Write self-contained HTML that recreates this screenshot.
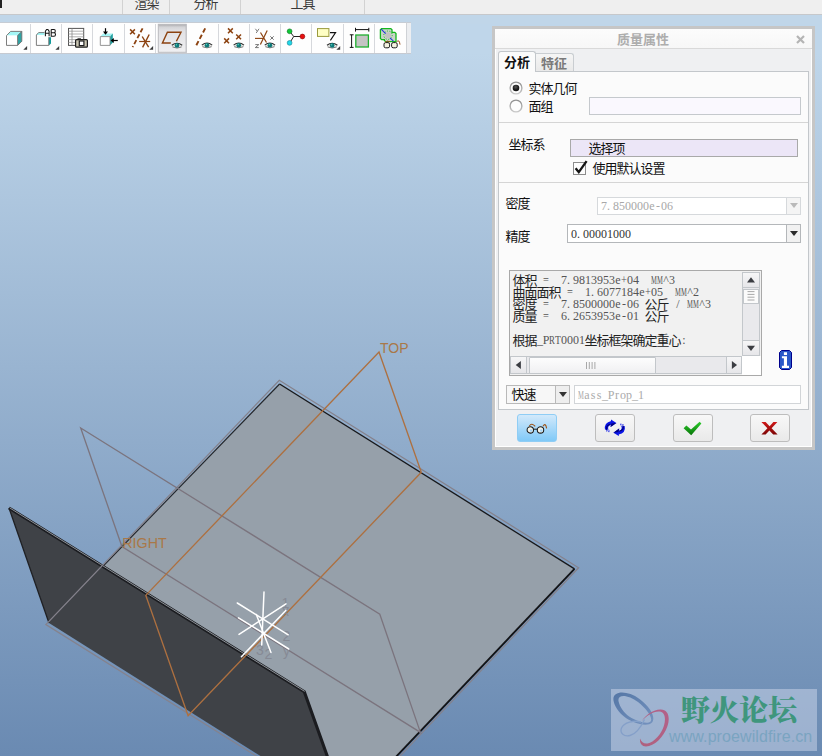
<!DOCTYPE html>
<html><head><meta charset="utf-8"><title>Mass Properties</title>
<style>
html,body{margin:0;padding:0}
body{width:822px;height:756px;overflow:hidden;position:relative;font-family:"Liberation Sans",sans-serif;
background:#95b0cf}
.abs{position:absolute}
#view{position:absolute;left:0;top:0;width:822px;height:756px;background:linear-gradient(to bottom,#bfd6ea 53px,#6a8ab2 756px)}
#menubar{position:absolute;left:0;top:0;width:822px;height:13.6px;background:#efefef;border-bottom:1px solid #c6c8cb;overflow:hidden}
#menubar i{position:absolute;top:0;width:1px;height:14px;background:#d2d2d2}
#strip{position:absolute;left:0;top:14.6px;width:822px;height:9px;background:#c0d6e9}
#toolbar{position:absolute;left:0;top:21.7px;width:405.5px;height:30.2px;background:#fefefe;border-top:1px solid #c6ccd4;border-bottom:1px solid #c6cad1;border-right:1px solid #cfd2d6}
#toolbar i{position:absolute;top:1px;width:1px;height:29px;background:#d6d8dc}
#dlg{position:absolute;left:492px;top:26px;width:317px;height:418px;border:3px solid #c6c6c6;background:#eff0f2}
#dlg .inner{position:absolute;left:0;top:0;right:0;bottom:0;border:1px solid #fff}
#title{position:absolute;left:0;top:0;width:317px;height:19px;background:linear-gradient(#fcfcfc,#f7f7f7);border-bottom:1px solid #d9d9d9}
#panel{position:absolute;left:3px;top:42px;width:309px;height:337px;border:1px solid #c3c7cb;background:#fbfbfb}
.hr{position:absolute;left:0;width:309px;height:1px;background:#d5d5d5}
.fld{position:absolute;box-sizing:border-box;border:1px solid #c5c9cd;background:#fff}
.btn{position:absolute;box-sizing:border-box;width:40px;height:28px;top:388px;border:1px solid #bdbdbd;border-radius:3px;background:linear-gradient(#f8f8f8,#e9e9e9)}
.cj{font-family:"Liberation Sans","Noto Sans CJK SC",sans-serif;font-size:12.96px;letter-spacing:-0.96px}
.cjb{font-family:"Liberation Sans","Noto Sans CJK SC",sans-serif;font-size:13px;font-weight:bold}
</style></head><body>
<div id="view"></div>

<svg class="abs" style="left:0;top:0" width="822" height="756" viewBox="0 0 822 756">
<polygon points="279.3,383.4 574.7,568.8 396.6,756 300,756 304,691.5 102.7,565.6" fill="#96a0aa"/>
<polyline points="103.2,566 279.6,384 " fill="none" stroke="#23262c" stroke-width="1.15"/>
<polyline points="279.6,384 574.5,568.9" fill="none" stroke="#17181b" stroke-width="1.35"/>
<polyline points="574.5,568.9 396.2,756.6" fill="none" stroke="#121316" stroke-width="1.9"/>
<polygon points="9,508 304.2,691.6 327,756 260.5,756 49,623" fill="#3f4247"/>
<polyline points="9,508 304.3,691.7 327.4,756.5" fill="none" stroke="#1b1c20" stroke-width="3.1" stroke-linejoin="miter"/>
<polyline points="9.6,507.8 304.7,691.4" fill="none" stroke="#9a9fa6" stroke-width="0.9"/>
<polyline points="9,508 49,623" fill="none" stroke="#1f2024" stroke-width="1.3"/>
<!-- FRONT datum (gray) -->
<polyline points="397.2,759 578.6,567.8 279.3,380.2 45.9,624.6 267.4,763" fill="none" stroke="#85828c" stroke-width="1.25"/>
<!-- RIGHT datum (gray) -->
<polygon points="80.7,428 379.8,614.2 420.4,732.4 121.9,546.5" fill="none" stroke="#7b747e" stroke-width="1.3"/>
<!-- TOP datum (orange) -->
<polygon points="379,352 421.3,472.3 188.1,715.7 145.8,595.4" fill="none" stroke="#ad7040" stroke-width="1.35"/>
<g font-family="Liberation Sans, sans-serif" font-size="14" fill="#868a95">
<text x="281.5" y="608">1</text><text x="282" y="615.7">x</text><text x="282.6" y="640.7">2</text><text x="283" y="656.2">y</text><text x="256" y="655">3</text><text x="264.6" y="659.2">2</text>
</g>
<g stroke="#fff" stroke-width="1.5" stroke-linecap="round">
<line x1="264" y1="592" x2="261.7" y2="645"/>
<line x1="237.3" y1="603" x2="288.2" y2="634.8"/>
<line x1="238.5" y1="617.9" x2="288.8" y2="649"/>
<line x1="239" y1="634.4" x2="286" y2="603.8"/>
<line x1="241.4" y1="656.8" x2="285.8" y2="610.4"/>
<line x1="256.3" y1="614.5" x2="271" y2="652.6"/>
</g>

<g font-family="Liberation Sans, sans-serif" font-size="14" fill="#a97848">
<text x="380" y="353">TOP</text><text x="122.3" y="547.8" font-size="14.3">RIGHT</text>
</g>
</svg>

<div id="menubar"><i style="left:122px"></i><i style="left:169px"></i><i style="left:240px"></i><i style="left:364px"></i><b class="abs" style="left:0;top:0;width:2px;height:8px;background:#222"></b>
<svg role="img" aria-label="渲染" style="position:absolute;left:134.7px;top:-2.6px;overflow:visible;" width="26" height="16"><text class="cj" x="-0.5" y="10.92" fill="#3a3a3a">渲染</text></svg>
<svg role="img" aria-label="分析" style="position:absolute;left:193.6px;top:-2.6px;overflow:visible;" width="26" height="16"><text class="cj" x="-0.5" y="10.92" fill="#3a3a3a">分析</text></svg>
<svg role="img" aria-label="工具" style="position:absolute;left:290.6px;top:-2.6px;overflow:visible;" width="26" height="16"><text class="cj" x="-0.5" y="10.92" fill="#3a3a3a">工具</text></svg>
</div><div id="strip"></div><div class="abs" style="left:406.5px;top:21.7px;width:4px;height:32.2px;background:#eceef1;border-top:1px solid #c6ccd4;border-bottom:1px solid #c6cad1;box-sizing:border-box"></div>
<div id="toolbar">
<i style="left:29.90px"></i>
<i style="left:61.17px"></i>
<i style="left:92.44px"></i>
<i style="left:123.71px"></i>
<i style="left:154.98px"></i>
<i style="left:186.25px"></i>
<i style="left:217.52px"></i>
<i style="left:248.79px"></i>
<i style="left:280.06px"></i>
<i style="left:311.33px"></i>
<i style="left:342.60px"></i>
<i style="left:373.87px"></i>
<svg class="abs" style="left:0;top:0.3px" width="410" height="30" viewBox="0 0 410 30"><defs><linearGradient id="pb" x1="0" y1="0" x2="0" y2="1"><stop offset="0" stop-color="#a9a9ac"/><stop offset="0.1" stop-color="#d4d4d7"/><stop offset="0.25" stop-color="#e2e2e5"/><stop offset="1" stop-color="#f0f0f2"/></linearGradient></defs><rect x="158.3" y="1.3" width="27.8" height="28" fill="url(#pb)" stroke="#b9b9bd" stroke-width="1"/><polygon points="6.5,12.600000000000001 10.6,8.399999999999999 21.8,8.399999999999999 17.6,12.600000000000001" fill="#a4f6f6"/><polygon points="17.6,12.600000000000001 21.8,8.399999999999999 21.8,18.299999999999997 17.6,22.4" fill="#2fa3a3"/><polygon points="6.5,12.600000000000001 17.6,12.600000000000001 17.6,22.4 6.5,22.4" fill="#ffffff"/><path d="M6.5 12.600000000000001L10.6 8.399999999999999H21.8V18.299999999999997L17.6 22.4H6.5ZM17.6 22.4V12.600000000000001L21.8 8.399999999999999" fill="none" stroke="#6e6e6e" stroke-width="0.9"/><path d="M27.1 22.9V26.7H23.3Z" fill="#3c3c3c"/><polygon points="36.4,12 38.6,9.600000000000001 44.5,9.600000000000001 44.5,12" fill="#a4f6f6"/><polygon points="48.8,14.200000000000003 51,14.200000000000003 51,20.6 48.8,22.4" fill="#119a9a"/><path d="M44.5 9.600000000000001H38.6L36.4 12V22.4H48.8V14.200000000000003" fill="none" stroke="#6e6e6e" stroke-width="0.9"/><path d="M45.4 13.200000000000003V8.2L46.6 6.399999999999999H47.9L49.1 8.2V13.200000000000003M45.4 10.299999999999997H49.1M51.2 6.399999999999999V13.200000000000003H54Q55.5 13.200000000000003 55.5 11.399999999999999Q55.5 9.700000000000003 54 9.700000000000003H51.2M54 9.700000000000003Q55.3 9.700000000000003 55.3 8Q55.3 6.399999999999999 54 6.399999999999999H51.2" fill="none" stroke="#151515" stroke-width="1.05"/><path d="M59.199999999999996 22.9V26.7H55.4Z" fill="#3c3c3c"/><rect x="68.5" y="5.399999999999999" width="15.2" height="17" fill="#fff" stroke="#555" stroke-width="1"/><line x1="68.5" y1="8.2" x2="83.7" y2="8.2" stroke="#9a9a9a" stroke-width="0.8" /><line x1="68.5" y1="11" x2="83.7" y2="11" stroke="#9a9a9a" stroke-width="0.8" /><line x1="68.5" y1="13.799999999999997" x2="83.7" y2="13.799999999999997" stroke="#9a9a9a" stroke-width="0.8" /><line x1="68.5" y1="16.6" x2="83.7" y2="16.6" stroke="#9a9a9a" stroke-width="0.8" /><line x1="68.5" y1="19.4" x2="83.7" y2="19.4" stroke="#9a9a9a" stroke-width="0.8" /><line x1="72" y1="5.399999999999999" x2="72" y2="22.4" stroke="#8a8a8a" stroke-width="0.8" /><rect x="75.6" y="16.6" width="11.8" height="7.6" rx="1" fill="#c9c5b2" stroke="#1e1e1e" stroke-width="1.2"/><rect x="77.5" y="15.299999999999997" width="3.4" height="1.6" fill="#1e1e1e"/><rect x="79.3" y="18" width="4.6" height="4.6" fill="#fff" stroke="#1e1e1e" stroke-width="1.2"/><polygon points="100.3,13.600000000000001 103.2,10.600000000000001 112.8,10.600000000000001 110,13.600000000000001" fill="#a4f6f6"/><polygon points="110,13.600000000000001 112.8,10.600000000000001 112.8,19.6 110,22.4" fill="#1fa0a0"/><polygon points="100.3,13.600000000000001 110,13.600000000000001 110,22.4 100.3,22.4" fill="#fff" stroke="#8a8a8a" stroke-width="0.9"/><line x1="105.5" y1="5.199999999999999" x2="105.5" y2="11" stroke="#000" stroke-width="1.2" /><polygon points="103,8.600000000000001 108,8.600000000000001 105.5,11.799999999999997" fill="#000"/><line x1="117.8" y1="17.5" x2="112" y2="17.5" stroke="#000" stroke-width="1.2" /><polygon points="113.8,15 113.8,20 110.6,17.5" fill="#000"/><path d="M130.1 6.4L134.9 11.200000000000001M134.9 6.4L130.1 11.200000000000001" stroke="#8c4210" stroke-width="1.5" fill="none"/><line x1="142.6" y1="5.300000000000001" x2="132.6" y2="24.200000000000003" stroke="#8c4210" stroke-width="1.8" stroke-dasharray="4.5 2.2"/><line x1="139.2" y1="18.5" x2="150.2" y2="18.5" stroke="#8c4210" stroke-width="1.2" /><line x1="149.2" y1="11.5" x2="142.6" y2="24.4" stroke="#8c4210" stroke-width="1.4" /><line x1="142.2" y1="13.5" x2="148.6" y2="24.200000000000003" stroke="#8c4210" stroke-width="1.4" /><path d="M153.10000000000002 22.9V26.7H149.3Z" fill="#3c3c3c"/><path d="M170.8 20H162.4L167.4 9.200000000000003H181L176.4 18.200000000000003" fill="none" stroke="#8c4210" stroke-width="1.4" stroke-linejoin="miter"/><ellipse cx="177" cy="22.599999999999998" rx="4.9" ry="2.2" fill="#e9e9e7"/><path d="M171.8 22.299999999999997Q177 18.2 182.2 22.299999999999997" fill="none" stroke="#2e2e2e" stroke-width="1.1"/><path d="M172.4 23.9Q177 26.2 181.6 23.9" fill="none" stroke="#6a6a6a" stroke-width="0.9"/><circle cx="177" cy="22.4" r="2.3" fill="#0c7a78"/><circle cx="176.4" cy="21.7" r="0.75" fill="#58c8c0"/><line x1="205.2" y1="5.399999999999999" x2="195.4" y2="24" stroke="#8c4210" stroke-width="1.9" stroke-dasharray="4.6 2.6"/><ellipse cx="207" cy="22.399999999999995" rx="4.9" ry="2.2" fill="#e9e9e7"/><path d="M201.8 22.099999999999994Q207 17.999999999999996 212.2 22.099999999999994" fill="none" stroke="#2e2e2e" stroke-width="1.1"/><path d="M202.4 23.699999999999996Q207 25.999999999999996 211.6 23.699999999999996" fill="none" stroke="#6a6a6a" stroke-width="0.9"/><circle cx="207" cy="22.199999999999996" r="2.3" fill="#0c7a78"/><circle cx="206.4" cy="21.499999999999996" r="0.75" fill="#58c8c0"/><path d="M228.0 5.4L232.8 10.200000000000001M232.8 5.4L228.0 10.200000000000001" stroke="#8c4210" stroke-width="1.5" fill="none"/><path d="M236.2 11.499999999999998L241.0 16.299999999999997M241.0 11.499999999999998L236.2 16.299999999999997" stroke="#8c4210" stroke-width="1.5" fill="none"/><path d="M224.2 15.399999999999997L229.0 20.199999999999996M229.0 15.399999999999997L224.2 20.199999999999996" stroke="#8c4210" stroke-width="1.5" fill="none"/><ellipse cx="238.8" cy="22.399999999999995" rx="4.9" ry="2.2" fill="#e9e9e7"/><path d="M233.60000000000002 22.099999999999994Q238.8 17.999999999999996 244.0 22.099999999999994" fill="none" stroke="#2e2e2e" stroke-width="1.1"/><path d="M234.20000000000002 23.699999999999996Q238.8 25.999999999999996 243.4 23.699999999999996" fill="none" stroke="#6a6a6a" stroke-width="0.9"/><circle cx="238.8" cy="22.199999999999996" r="2.3" fill="#0c7a78"/><circle cx="238.20000000000002" cy="21.499999999999996" r="0.75" fill="#58c8c0"/><line x1="255" y1="15.399999999999999" x2="264" y2="15.399999999999999" stroke="#8c4210" stroke-width="1.1" /><line x1="260.5" y1="9.5" x2="266.5" y2="19.5" stroke="#8c4210" stroke-width="1.2" /><line x1="267.2" y1="7.399999999999999" x2="260.4" y2="21.6" stroke="#8c4210" stroke-width="1.2" /><path d="M255.4 5.800000000000001L257.2 8.2M259 5.800000000000001L256.2 10" fill="none" stroke="#6e6e6e" stroke-width="0.9"/><path d="M270.3 13.3L273.7 16.7M273.7 13.3L270.3 16.7" stroke="#777" stroke-width="1" fill="none"/><path d="M255.3 21.6H258.8L255.3 24.6H258.8" fill="none" stroke="#666" stroke-width="0.9"/><ellipse cx="269.9" cy="22.399999999999995" rx="4.9" ry="2.2" fill="#e9e9e7"/><path d="M264.7 22.099999999999994Q269.9 17.999999999999996 275.09999999999997 22.099999999999994" fill="none" stroke="#2e2e2e" stroke-width="1.1"/><path d="M265.29999999999995 23.699999999999996Q269.9 25.999999999999996 274.5 23.699999999999996" fill="none" stroke="#6a6a6a" stroke-width="0.9"/><circle cx="269.9" cy="22.199999999999996" r="2.3" fill="#0c7a78"/><circle cx="269.29999999999995" cy="21.499999999999996" r="0.75" fill="#58c8c0"/><line x1="293.7" y1="13.5" x2="289.8" y2="8.5" stroke="#222" stroke-width="1" /><line x1="293.7" y1="13.5" x2="302.5" y2="13.5" stroke="#222" stroke-width="1" /><line x1="293.7" y1="13.5" x2="289.8" y2="19.799999999999997" stroke="#222" stroke-width="1" /><circle cx="289.6" cy="8.3" r="2.4" fill="#10c838" stroke="#0a7020" stroke-width="0.6"/><circle cx="302.4" cy="13.5" r="2.4" fill="#e81010" stroke="#800" stroke-width="0.6"/><circle cx="289.6" cy="19.9" r="2.4" fill="#20d8e8" stroke="#108090" stroke-width="0.6"/><rect x="317.5" y="5.600000000000001" width="11.4" height="7.8" fill="#ffffc4" stroke="#9a9a3c" stroke-width="1"/><path d="M330 9.600000000000001H335.6L330.4 17.4" fill="none" stroke="#111" stroke-width="1.1"/><ellipse cx="332.2" cy="22.599999999999998" rx="4.9" ry="2.2" fill="#e9e9e7"/><path d="M327.0 22.299999999999997Q332.2 18.2 337.4 22.299999999999997" fill="none" stroke="#2e2e2e" stroke-width="1.1"/><path d="M327.59999999999997 23.9Q332.2 26.2 336.8 23.9" fill="none" stroke="#6a6a6a" stroke-width="0.9"/><circle cx="332.2" cy="22.4" r="2.3" fill="#0c7a78"/><circle cx="331.59999999999997" cy="21.7" r="0.75" fill="#58c8c0"/><path d="M340.2 22.9V26.7H336.4Z" fill="#3c3c3c"/><rect x="355.8" y="12" width="12.6" height="12" fill="#c4c4c4" stroke="#1fb030" stroke-width="1.3"/><line x1="355.5" y1="6.600000000000001" x2="368.8" y2="6.600000000000001" stroke="#111" stroke-width="1" /><line x1="355.5" y1="4.800000000000001" x2="355.5" y2="8.600000000000001" stroke="#111" stroke-width="1" /><line x1="368.8" y1="4.800000000000001" x2="368.8" y2="8.600000000000001" stroke="#111" stroke-width="1" /><line x1="351.6" y1="11.799999999999997" x2="351.6" y2="24.4" stroke="#111" stroke-width="1" /><line x1="349.8" y1="11.799999999999997" x2="353.6" y2="11.799999999999997" stroke="#111" stroke-width="1" /><line x1="349.8" y1="24.4" x2="353.6" y2="24.4" stroke="#111" stroke-width="1" /><path d="M381.6 5.600000000000001H390.8L392 6.800000000000001V9.399999999999999H394.8L396 10.600000000000001V18.6H385.6L384.4 17.4V16.6H381.6L380.4 15.399999999999999V6.800000000000001Z" fill="#c9d4c9" stroke="#14b81e" stroke-width="1.3"/><circle cx="388" cy="12.200000000000003" r="3" fill="#c2c2c2"/><circle cx="388" cy="12.200000000000003" r="4.2" fill="none" stroke="#14b81e" stroke-width="1" stroke-dasharray="1 1.6"/><line x1="381.2" y1="6.199999999999999" x2="385.6" y2="10.600000000000001" stroke="#1c38d8" stroke-width="1.1" /><line x1="390" y1="14.799999999999997" x2="393.4" y2="18.200000000000003" stroke="#1c38d8" stroke-width="1.1" /><rect x="384" y="19.6" width="5.6" height="5.2" rx="1.6" fill="#f4f2e0" stroke="#1c1c1c" stroke-width="1"/><rect x="391.6" y="19.6" width="5.6" height="5.2" rx="1.6" fill="#f4f2e0" stroke="#1c1c1c" stroke-width="1"/><path d="M385 19.4Q387 17 390 18.799999999999997" fill="none" stroke="#9a4c14" stroke-width="1"/><path d="M396.6 19Q399.2 15.600000000000001 400 21.6" fill="none" stroke="#9a4c14" stroke-width="1"/></svg>
</div>
<div id="dlg"><div class="inner"></div><div id="title"></div>
<svg role="img" aria-label="质量属性" style="position:absolute;left:122.39999999999998px;top:3.6000000000000014px;overflow:visible;" width="54" height="17"><text class="cjb" x="0" y="11.44" fill="#adadad">质量属性</text></svg>
<svg class="abs" style="left:301px;top:6px" width="9" height="9"><path d="M1 1L8 8M8 1L1 8" stroke="#b4b4b4" stroke-width="2.2"/></svg>
<div class="abs" style="left:3px;top:22px;width:38px;height:21px;box-sizing:border-box;border:1px solid #c3c7cb;border-bottom:none;border-radius:3px 3px 0 0;background:#fbfbfb;z-index:3"></div>
<div class="abs" style="left:40px;top:24px;width:39px;height:18px;box-sizing:border-box;border:1px solid #c9cdd1;border-bottom:none;border-left:none;border-radius:0 3px 0 0;background:linear-gradient(#f5f5f5,#e9e9e9)"></div>
<div id="panel">
</div>
<svg role="img" aria-label="分析" style="position:absolute;left:8.800000000000011px;top:27px;overflow:visible;z-index:4" width="28" height="17"><text class="cjb" x="0" y="11.44" fill="#111">分析</text></svg>
<svg role="img" aria-label="特征" style="position:absolute;left:46.299999999999955px;top:28px;overflow:visible;" width="28" height="17"><text class="cjb" x="0" y="11.44" fill="#7a7a7a">特征</text></svg>
<svg width="0" height="0" style="position:absolute"><defs><linearGradient id="rg" x1="0" y1="0" x2="0" y2="1"><stop offset="0" stop-color="#8f8f8f"/><stop offset="1" stop-color="#c9c9c9"/></linearGradient><radialGradient id="rd" cx="0.45" cy="0.35" r="0.7"><stop offset="0" stop-color="#555"/><stop offset="0.6" stop-color="#1a1a1a"/><stop offset="1" stop-color="#111"/></radialGradient></defs></svg>
<svg class="abs" style="left:13.5px;top:52.0px" width="14" height="14"><circle cx="7" cy="7" r="5.9" fill="#fdfdfd" stroke="url(#rg)" stroke-width="1.4"/><circle cx="7" cy="7" r="3.3" fill="url(#rd)"/></svg>
<svg class="abs" style="left:13.5px;top:69.9px" width="14" height="14"><circle cx="7" cy="7" r="5.9" fill="#fdfdfd" stroke="url(#rg)" stroke-width="1.4"/></svg>
<svg role="img" aria-label="实体几何" style="position:absolute;left:34px;top:53px;overflow:visible;" width="50" height="16"><text class="cj" x="-0.5" y="10.92" fill="#111">实体几何</text></svg>
<svg role="img" aria-label="面组" style="position:absolute;left:34px;top:71px;overflow:visible;" width="26" height="16"><text class="cj" x="-0.5" y="10.92" fill="#111">面组</text></svg>
<div class="fld" style="left:94px;top:68px;width:212px;height:18px;background:#faf8fe"></div>
<div class="hr" style="left:4px;top:93px"></div>
<svg role="img" aria-label="坐标系" style="position:absolute;left:13.600000000000023px;top:108.5px;overflow:visible;" width="38" height="16"><text class="cj" x="-0.5" y="10.92" fill="#111">坐标系</text></svg>
<div class="fld" style="left:75px;top:110px;width:228px;height:18px;background:#ece6f7;border-color:#a9a9a9"></div>
<svg role="img" aria-label="选择项" style="position:absolute;left:93.5px;top:113px;overflow:visible;" width="38" height="16"><text class="cj" x="-0.5" y="10.92" fill="#111">选择项</text></svg>
<svg class="abs" style="left:78px;top:131px;overflow:visible" width="17" height="16"><rect x="0.5" y="2.5" width="12" height="12" fill="#fdfdfd" stroke="#8c8c8c"/><path d="M2.6 8.2L5.8 12.2L13.6 1.2" fill="none" stroke="#141414" stroke-width="2.3"/></svg>
<svg role="img" aria-label="使用默认设置" style="position:absolute;left:98px;top:133px;overflow:visible;" width="74" height="16"><text class="cj" x="-0.5" y="10.92" fill="#111">使用默认设置</text></svg>
<div class="hr" style="left:4px;top:153px"></div>
<svg role="img" aria-label="密度" style="position:absolute;left:10.600000000000023px;top:168.4px;overflow:visible;" width="26" height="16"><text class="cj" x="-0.5" y="10.92" fill="#111">密度</text></svg>
<div class="fld" style="left:102px;top:168px;width:204px;height:18px;border-color:#d6d9dc"></div>
<div class="fld" style="left:291px;top:168px;width:15px;height:18px;border-color:#d6d9dc;background:#f4f4f4"></div>
<svg class="abs" style="left:295px;top:174px" width="8" height="6"><path d="M0 0H8L4 5Z" fill="#b9b9b9"/></svg>
<svg role="img" aria-label="7.850000e-06" style="position:absolute;left:106px;top:171px;overflow:visible;" width="74" height="16"><text x="3.00 7.44 15.00 21.00 27.00 33.00 39.00 45.00 51.00 57.00 63.00 69.00" y="9.56" text-anchor="middle" font-family="Liberation Serif, serif" font-size="12" fill="#a8a8a8">7.850000e-06</text></svg>
<svg role="img" aria-label="精度" style="position:absolute;left:10.600000000000023px;top:200.7px;overflow:visible;" width="26" height="16"><text class="cj" x="-0.5" y="10.92" fill="#111">精度</text></svg>
<div class="fld" style="left:72px;top:195px;width:234px;height:19px;border-color:#b4b7ba"></div>
<div class="fld" style="left:291px;top:195px;width:15px;height:19px;border-color:#b4b7ba;background:#f1f1f1"></div>
<svg class="abs" style="left:295px;top:202px" width="8" height="6"><path d="M0 0H8L4 5Z" fill="#2a2a2a"/></svg>
<svg role="img" aria-label="0.00001000" style="position:absolute;left:76px;top:198.5px;overflow:visible;" width="62" height="16"><text x="3.00 7.44 15.00 21.00 27.00 33.00 39.00 45.00 51.00 57.00" y="9.56" text-anchor="middle" font-family="Liberation Serif, serif" font-size="12" fill="#333">0.00001000</text></svg>
<div class="fld" style="left:14px;top:241px;width:253px;height:106px;border-color:#a9a9a9;background:#f1f1f1"></div>
<svg role="img" aria-label="体积 =  7.9813953e+04  MM^3" style="position:absolute;left:18px;top:245px;overflow:visible;" width="164" height="16"><text class="cj" x="-0.5" y="10.92" fill="#222">体积</text><text transform="translate(33.00,0) scale(0.869,1)" y="9.56" text-anchor="middle" font-family="Liberation Serif, serif" font-size="12" fill="#555">=</text><text transform="translate(111.00,0) scale(0.869,1)" y="9.56" text-anchor="middle" font-family="Liberation Serif, serif" font-size="12" fill="#555">+</text><text transform="translate(141.00,0) scale(0.551,1)" y="9.56" text-anchor="middle" font-family="Liberation Serif, serif" font-size="12" fill="#555">M</text><text transform="translate(147.00,0) scale(0.551,1)" y="9.56" text-anchor="middle" font-family="Liberation Serif, serif" font-size="12" fill="#555">M</text><text x="51.00 55.44 63.00 69.00 75.00 81.00 87.00 93.00 99.00 105.00 117.00 123.00 153.00 159.00" y="9.56" text-anchor="middle" font-family="Liberation Serif, serif" font-size="12" fill="#555">7.9813953e04^3</text></svg>
<svg role="img" aria-label="曲面面积 =  1.6077184e+05  MM^2" style="position:absolute;left:18px;top:257px;overflow:visible;" width="188" height="16"><text class="cj" x="-0.5" y="10.92" fill="#222">曲面面积</text><text transform="translate(57.00,0) scale(0.869,1)" y="9.56" text-anchor="middle" font-family="Liberation Serif, serif" font-size="12" fill="#555">=</text><text transform="translate(135.00,0) scale(0.869,1)" y="9.56" text-anchor="middle" font-family="Liberation Serif, serif" font-size="12" fill="#555">+</text><text transform="translate(165.00,0) scale(0.551,1)" y="9.56" text-anchor="middle" font-family="Liberation Serif, serif" font-size="12" fill="#555">M</text><text transform="translate(171.00,0) scale(0.551,1)" y="9.56" text-anchor="middle" font-family="Liberation Serif, serif" font-size="12" fill="#555">M</text><text x="75.00 79.44 87.00 93.00 99.00 105.00 111.00 117.00 123.00 129.00 141.00 147.00 177.00 183.00" y="9.56" text-anchor="middle" font-family="Liberation Serif, serif" font-size="12" fill="#555">1.6077184e05^2</text></svg>
<svg role="img" aria-label="密度 =  7.8500000e-06 公斤 / MM^3" style="position:absolute;left:18px;top:269px;overflow:visible;" width="200" height="16"><text class="cj" x="-0.5" y="10.92" fill="#222">密度</text><text class="cj" x="131.5" y="10.92" fill="#222">公斤</text><text transform="translate(33.00,0) scale(0.869,1)" y="9.56" text-anchor="middle" font-family="Liberation Serif, serif" font-size="12" fill="#555">=</text><text transform="translate(177.00,0) scale(0.551,1)" y="9.56" text-anchor="middle" font-family="Liberation Serif, serif" font-size="12" fill="#555">M</text><text transform="translate(183.00,0) scale(0.551,1)" y="9.56" text-anchor="middle" font-family="Liberation Serif, serif" font-size="12" fill="#555">M</text><text x="51.00 55.44 63.00 69.00 75.00 81.00 87.00 93.00 99.00 105.00 111.00 117.00 123.00 165.00 189.00 195.00" y="9.56" text-anchor="middle" font-family="Liberation Serif, serif" font-size="12" fill="#555">7.8500000e-06/^3</text></svg>
<svg role="img" aria-label="质量 =  6.2653953e-01 公斤" style="position:absolute;left:18px;top:281px;overflow:visible;" width="158" height="16"><text class="cj" x="-0.5" y="10.92" fill="#222">质量</text><text class="cj" x="131.5" y="10.92" fill="#222">公斤</text><text transform="translate(33.00,0) scale(0.869,1)" y="9.56" text-anchor="middle" font-family="Liberation Serif, serif" font-size="12" fill="#555">=</text><text x="51.00 55.44 63.00 69.00 75.00 81.00 87.00 93.00 99.00 105.00 111.00 117.00 123.00" y="9.56" text-anchor="middle" font-family="Liberation Serif, serif" font-size="12" fill="#555">6.2653953e-01</text></svg>
<svg role="img" aria-label="根据_PRT0001坐标框架确定重心:" style="position:absolute;left:18px;top:305px;overflow:visible;" width="176" height="16"><text class="cj" x="-0.5" y="10.92" fill="#222">根据</text><text class="cj" x="71.5" y="10.92" fill="#222">坐标框架确定重心</text><text transform="translate(39.00,0) scale(0.735,1)" y="9.56" text-anchor="middle" font-family="Liberation Serif, serif" font-size="12" fill="#555">R</text><text transform="translate(45.00,0) scale(0.802,1)" y="9.56" text-anchor="middle" font-family="Liberation Serif, serif" font-size="12" fill="#555">T</text><text x="27.00 33.00 51.00 57.00 63.00 69.00 171.00" y="9.56" text-anchor="middle" font-family="Liberation Serif, serif" font-size="12" fill="#555">_P0001:</text></svg>
<div class="abs" style="left:247px;top:243px;width:18px;height:84px;box-sizing:border-box;background:#e9e9ec;border-left:1px solid #c3c7cb;border-right:1px solid #c3c7cb"></div>
<div class="abs" style="left:247px;top:243px;width:18px;height:16px;box-sizing:border-box;border:1px solid #c3c7cb;background:linear-gradient(#f6f6f7,#e6e6e9)"><svg class="abs" style="left:-1px;top:-1px" width="18" height="16"><path d="M5.0 10.4H13.0L9.0 5.2Z" fill="#3b3d42"/></svg></div>
<div class="abs" style="left:247px;top:310.5px;width:18px;height:16.5px;box-sizing:border-box;border:1px solid #c3c7cb;background:linear-gradient(#f6f6f7,#e6e6e9)"><svg class="abs" style="left:-1px;top:-1px" width="18" height="16.5"><path d="M5.0 5.85H13.0L9.0 11.05Z" fill="#3b3d42"/></svg></div>
<div class="abs" style="left:248px;top:260px;width:16px;height:14.5px;box-sizing:border-box;border:1px solid #c3c7cb;background:#fbfbfb"><svg class="abs" style="left:-1px;top:-1px" width="16" height="15"><path d="M4.5 2.6H11.5M4.5 5.4H11.5M4.5 8.2H11.5M4.5 11H11.5" stroke="#a8a8a8" stroke-width="1"/></svg></div>
<div class="abs" style="left:15px;top:327.3px;width:232px;height:18px;box-sizing:border-box;background:#e9e9ec;border-top:1px solid #c3c7cb;border-bottom:1px solid #c3c7cb"></div>
<div class="abs" style="left:15px;top:327.3px;width:17px;height:18px;box-sizing:border-box;border:1px solid #c3c7cb;background:linear-gradient(#f6f6f7,#e6e6e9)"><svg class="abs" style="left:-1px;top:-1px" width="17" height="18"><path d="M10.9 5.0V13.0L5.7 9.0Z" fill="#3b3d42"/></svg></div>
<div class="abs" style="left:230.5px;top:327.3px;width:16.5px;height:18px;box-sizing:border-box;border:1px solid #c3c7cb;background:linear-gradient(#f6f6f7,#e6e6e9)"><svg class="abs" style="left:-1px;top:-1px" width="16.5" height="18"><path d="M5.85 5.0V13.0L11.05 9.0Z" fill="#3b3d42"/></svg></div>
<div class="abs" style="left:33.5px;top:328px;width:127.5px;height:16.5px;box-sizing:border-box;border:1px solid #c3c7cb;border-radius:1px;background:linear-gradient(#fdfdfd,#f0f0f2)"><svg class="abs" style="left:55px;top:3px" width="12" height="10"><path d="M1.5 1V8M4.3 1V8M7.1 1V8M9.9 1V8" stroke="#a8a8a8" stroke-width="1"/></svg></div>
<div class="abs" style="left:247px;top:327.3px;width:19px;height:18.6px;background:#fff"></div>
<svg class="abs" width="13" height="20" viewBox="0 0 13 20" style="left:284px;top:321px"><path d="M2.5 0.5H10.5L12.5 2.5V17.5L10.5 19.5H2.5L0.5 17.5V2.5Z" fill="#2a58c8" stroke="#00008c" stroke-width="1"/><path d="M4.9 2.2H8V4.9H4.9ZM2.9 6.2H8V15.8H10V18H2.9V15.8H4.9V8.2H2.9Z" fill="#fff"/></svg>
<div class="fld" style="left:11px;top:356px;width:64px;height:19px;border-color:#b9b9b9;background:#f7f7f7"></div>
<div class="fld" style="left:60px;top:356px;width:15px;height:19px;border-color:#b9b9b9;background:#eee"></div>
<svg class="abs" style="left:64px;top:363px" width="8" height="6"><path d="M0 0H8L4 5Z" fill="#333"/></svg>
<svg role="img" aria-label="快速" style="position:absolute;left:17px;top:359px;overflow:visible;" width="26" height="16"><text class="cj" x="-0.5" y="10.92" fill="#111">快速</text></svg>
<div class="fld" style="left:79px;top:356px;width:227px;height:19px;border-color:#d2d5d8"></div>
<svg role="img" aria-label="Mass_Prop_1" style="position:absolute;left:83px;top:359.5px;overflow:visible;" width="68" height="16"><text transform="translate(3.00,0) scale(0.551,1)" y="9.56" text-anchor="middle" font-family="Liberation Serif, serif" font-size="12" fill="#aaa">M</text><text x="9.00 15.00 21.00 27.00 33.00 39.00 45.00 51.00 57.00 63.00" y="9.56" text-anchor="middle" font-family="Liberation Serif, serif" font-size="12" fill="#aaa">ass_Prop_1</text></svg>
<div class="btn" style="left:22px;top:385px;background:linear-gradient(#d2e9fb,#80c9f7);border-color:#8fcdf5"><svg class="abs" style="left:7px;top:8px" width="26" height="12" viewBox="0 0 26 12"><path d="M4.4 3Q6.6 -0.6 10.2 3.4" fill="none" stroke="#a0500f" stroke-width="1.1"/><path d="M18 3.2Q20.6 -0.8 21.6 5.4" fill="none" stroke="#a0500f" stroke-width="1.1"/><circle cx="5.3" cy="6.9" r="3.2" fill="#f7f5e8" stroke="#1c1c1c" stroke-width="1.05"/><circle cx="15.5" cy="6.9" r="3.2" fill="#f7f5e8" stroke="#1c1c1c" stroke-width="1.05"/><path d="M8.5 6.2H12.3" stroke="#1c1c1c" stroke-width="1"/><circle cx="6.1" cy="7.6" r="1.3" fill="#a4d4f6"/><circle cx="16.3" cy="7.6" r="1.3" fill="#a4d4f6"/></svg></div>
<div class="btn" style="left:100.20000000000005px;top:385px;"><svg class="abs" style="left:-1px;top:-1px" width="40" height="28" viewBox="0 0 40 28"><g><path d="M11.6 15.4Q10.6 10 16.6 8.6" fill="none" stroke="#0a14e6" stroke-width="3.2"/><path d="M11.6 15.8Q10.8 11.4 15.5 10.4" fill="none" stroke="#00007e" stroke-width="1.2"/><path d="M16 5.6L21.4 8.9L15.6 13Z" fill="#0a14e6"/><path d="M16.4 9.6L21.4 8.9L15.6 13Z" fill="#00007e"/><path d="M11.4 16.6L15.4 17.6" stroke="#0a14e6" stroke-width="1.6" stroke-dasharray="1 1.1"/><path d="M12.4 15.2L14.4 16" stroke="#0a14e6" stroke-width="1.2" stroke-dasharray="1 1"/></g><g transform="rotate(180 19.9 13.8)"><path d="M11.6 15.4Q10.6 10 16.6 8.6" fill="none" stroke="#0a14e6" stroke-width="3.2"/><path d="M11.6 15.8Q10.8 11.4 15.5 10.4" fill="none" stroke="#00007e" stroke-width="1.2"/><path d="M16 5.6L21.4 8.9L15.6 13Z" fill="#0a14e6"/><path d="M16.4 9.6L21.4 8.9L15.6 13Z" fill="#00007e"/><path d="M11.4 16.6L15.4 17.6" stroke="#0a14e6" stroke-width="1.6" stroke-dasharray="1 1.1"/><path d="M12.4 15.2L14.4 16" stroke="#0a14e6" stroke-width="1.2" stroke-dasharray="1 1"/></g></svg></div>
<div class="btn" style="left:178.20000000000005px;top:385px;"><svg class="abs" style="left:-1px;top:-1px" width="40" height="28" viewBox="0 0 40 28"><defs><linearGradient id="gk" x1="0" y1="0" x2="0" y2="1"><stop offset="0" stop-color="#2ccc2c"/><stop offset="1" stop-color="#087408"/></linearGradient></defs><path d="M10.6 14.2L13.4 11.6L18 15.6L26.6 7.8L28.4 9.6L18.2 21.2Z" fill="url(#gk)"/></svg></div>
<div class="btn" style="left:255.20000000000005px;top:385px;"><svg class="abs" style="left:-1px;top:-1px" width="40" height="28" viewBox="0 0 40 28"><defs><linearGradient id="gx" x1="0" y1="0" x2="0" y2="1"><stop offset="0" stop-color="#d01818"/><stop offset="1" stop-color="#7c0606"/></linearGradient></defs><path d="M11.4 8H15.6L19.6 12.2L23.4 8H27.4L21.6 14.2L27.6 20.6H23.2L19.4 16.4L15.6 20.6H11.4L17.4 14.2Z" fill="url(#gx)"/></svg></div>
</div>
<div class="abs" style="left:611px;top:689px;width:206px;height:62px;background:rgba(206,216,236,0.5)"></div>
<svg class="abs" style="left:611px;top:689px;opacity:0.82" width="60" height="62" viewBox="611 689 60 62"><defs><linearGradient id="wb" x1="0" y1="0" x2="1" y2="1"><stop offset="0" stop-color="#44699c"/><stop offset="1" stop-color="#6c8cbc"/></linearGradient><linearGradient id="wp" x1="1" y1="0" x2="0" y2="1"><stop offset="0" stop-color="#b8507a"/><stop offset="1" stop-color="#b4506c"/></linearGradient></defs><path fill-rule="evenodd" fill="url(#wb)" d="M613.6 701C611.4 690.5 627 689.8 639.5 699C650.5 707.2 656 717.5 652 722.5C647 727.5 632 723 624 716.5C618.5 712 614.6 706 613.6 701ZM618.6 701.5C619.8 707 624 713 629.5 716.8C636.5 721.4 647.4 724.6 650.6 721.4C653.2 718.2 647 709 638 702C628.5 694.6 616.8 693.4 618.6 701.5Z"/><path fill-rule="evenodd" fill="url(#wp)" d="M660 709.6C668 709 670.5 717 667.5 726C664 737 654 746.5 646 746.5C641.5 746.5 639.5 743 640 738.5C641.5 742.5 644 744 647.5 743.5C654 742.5 661.5 734 664 725.5C666 718.5 665 712 659.5 711.5C653 711.2 646 716 641.5 721.5C646.5 714 653.5 710 660 709.6Z"/><path fill="none" stroke="#7f9cc8" stroke-width="1.3" d="M641 722C634 720 624 722.5 621.5 728C619.5 733 624 737 630 735.5C636 734 641 727 644.5 719.5"/></svg>
<svg role="img" aria-label="野火论坛" style="position:absolute;left:680.5px;top:694.5px;overflow:visible;" width="118" height="38"><text x="0" y="25.52" font-family="Liberation Serif, Noto Serif CJK SC, serif" font-size="29" font-weight="900" fill="#3f967d">野火论坛</text></svg>
<div class="abs" id="url" style="left:669px;top:728px;font-size:16px;line-height:18px;color:#7aa4c1;letter-spacing:0.1px;white-space:nowrap">www.proewildfire.cn</div>
</body></html>
